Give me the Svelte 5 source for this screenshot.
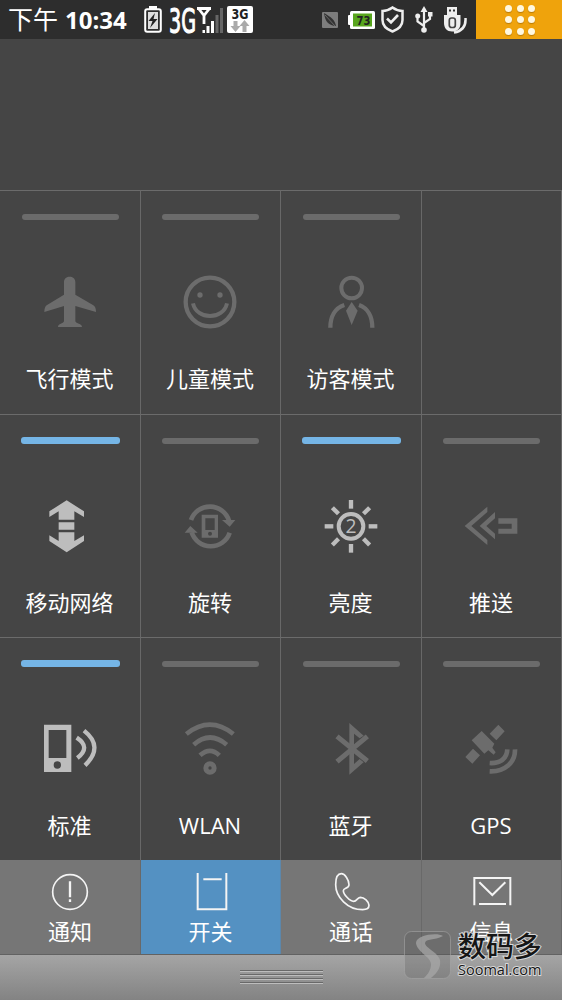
<script lang="ts">
  type Toggle = { icon: string; label: string; on?: boolean };

  const toggles = $state<Toggle[]>([
    { icon: 'plane', label: '飞行模式' },
    { icon: 'child', label: '儿童模式' },
    { icon: 'guest', label: '访客模式' },
    { icon: '', label: '' },
    { icon: 'data', label: '移动网络', on: true },
    { icon: 'rotate', label: '旋转' },
    { icon: 'brightness', label: '亮度', on: true },
    { icon: 'push', label: '推送' },
    { icon: 'sound', label: '标准', on: true },
    { icon: 'wlan', label: 'WLAN' },
    { icon: 'bluetooth', label: '蓝牙' },
    { icon: 'gps', label: 'GPS' }
  ]);

  const tabs = [
    { icon: 'notice', label: '通知' },
    { icon: 'switch', label: '开关' },
    { icon: 'call', label: '通话' },
    { icon: 'message', label: '信息' }
  ];

  let activeTab = $state('switch');

  function flip(item: Toggle) {
    item.on = !item.on;
  }
</script>

<main class="panel">
  <!-- Status bar -->
  <header class="status">
    <div class="status-left">
      <span class="ampm">下午</span>
      <span class="clock">10:34</span>
      <svg class="charge" width="18" height="27" viewBox="0 0 18 27">
        <rect x="5" y="0" width="8" height="4" fill="#fff" />
        <rect x="1.2" y="3.2" width="15.6" height="22.6" rx="2" fill="none" stroke="#fff" stroke-width="2" />
        <rect x="4" y="6" width="10" height="17" fill="#ddd" />
        <path d="M11 7 L4.5 15 H8.5 L6 22 L13.5 13 H9.5 Z" fill="#222" />
      </svg>
      <svg class="signal" width="54" height="28" viewBox="0 0 54 28">
        <text class="tech" x="0" y="27" font-size="34" textLength="27" lengthAdjust="spacingAndGlyphs">3G</text>
        <path d="M28 2.500 H42 M29.500 2.500 L35 9.500 L40.500 2.500 M35 9 V18" fill="none" stroke="#fff" stroke-width="2.800" />
        <path d="M33.500 24 h2.500 v3 h-2.500z M37.500 20 h3 v7 h-3z M42 15 h3 v12 h-3z" fill="#fff" />
        <path d="M46.500 9 h3 v18 h-3z M51 2 h3 v25 h-3z" fill="#666" />
      </svg>
      <svg class="traffic" width="26" height="27" viewBox="0 0 26 27">
        <rect width="26" height="27" rx="2" fill="#fff" />
        <text x="4.500" y="13" font-size="14" textLength="17" lengthAdjust="spacingAndGlyphs">3G</text>
        <path d="M6.500 15 h4 v5 h3 l-5 6 l-5 -6 h3z M15.500 26 h4 v-6 h3 l-5 -6 l-5 6 h3z" fill="#aaa" />
      </svg>
    </div>
    <div class="status-right">
      <svg class="feather" width="16" height="16" viewBox="0 0 16 16">
        <rect width="16" height="16" rx="1" fill="#7d7d7d" />
        <path d="M2 1 C3 10 7 13.500 14 14 C13 8 9 5 2 1Z" fill="#333" />
        <path d="M3 3 L13 14" stroke="#777" stroke-width="0.800" />
      </svg>
      <svg class="battery" width="27" height="18" viewBox="0 0 27 18">
        <rect x="0" y="4" width="4" height="10" rx="1" fill="#fff" />
        <rect x="2" y="0" width="25" height="18" rx="1.500" fill="#fff" />
        <rect x="5" y="2.500" width="19" height="13" fill="#58a51d" />
        <text x="8.500" y="13.800" font-size="13" textLength="14" lengthAdjust="spacingAndGlyphs">73</text>
      </svg>
      <svg class="shield" width="23" height="27" viewBox="0 0 23 27">
        <path
          d="M11.500 1.500 C8 4 5 5 1.500 5 V14 C1.500 20 6 23.500 11.500 25.500 C17 23.500 21.500 20 21.500 14 V5 C18 5 15 4 11.500 1.500Z"
          fill="none"
          stroke="#eee"
          stroke-width="2.500"
        />
        <path d="M6 12.500 L10 16.500 L17 9" fill="none" stroke="#eee" stroke-width="2.600" />
      </svg>
      <svg class="usb" width="18" height="27" viewBox="0 0 18 27">
        <path d="M9 5 V24 M9 20 L2.500 15.500 V11 M9 17 L15 13 V9" fill="none" stroke="#eee" stroke-width="2.200" />
        <path d="M5.500 6 L9 0 L12.500 6Z" fill="#eee" />
        <circle cx="2.700" cy="10" r="2.500" fill="#eee" />
        <rect x="13" y="6" width="4.500" height="4.500" fill="#eee" />
        <circle cx="9" cy="24" r="2.800" fill="#eee" />
      </svg>
      <svg class="usb-debug" width="24" height="28" viewBox="0 0 24 28">
        <path d="M4 1 H14 V10 H4Z" fill="#eee" />
        <path d="M6 3.500 h2 v2 h-2z M10 3.500 h2 v2 h-2z" fill="#333" />
        <path d="M1 9 H17.500 V17 C17.500 23 14 25.500 9 25.500 C4 25.500 1 22 1 17Z" fill="#eee" />
        <rect x="6.300" y="12" width="6" height="9.500" rx="2.300" fill="none" stroke="#444" stroke-width="1.700" />
        <path d="M22.500 12 C23 19 20 25 11 26.500" fill="none" stroke="#eee" stroke-width="2.500" />
      </svg>
      <div class="apps">
        {#each Array(9) as _}
          <i></i>
        {/each}
      </div>
    </div>
  </header>

  <!-- Quick toggles -->
  <section class="grid">
    {#each toggles as item}
      {#if item.icon}
        <button class="cell" class:on={item.on} type="button" onclick={() => flip(item)}>
          <span class="bar"></span>
          <svg class="icon" viewBox="0 0 168 168">
            {#if item.icon === 'plane'}
              <path
                class="solid"
                d="M66 24 C66 3 100 3 100 24 V62 L154 94 Q162 99 162 114 L100 96 V142 C102 149 120 149 120 159 H48 C48 149 64 149 66 142 V96 L7 114 Q7 99 14 94 L66 62Z"
              />
            {:else if item.icon === 'child'}
              <circle class="line" cx="84" cy="84" r="73" stroke-width="13" />
              <circle class="solid" cx="54" cy="63" r="8" />
              <circle class="solid" cx="114" cy="63" r="8" />
              <path class="line" d="M33 88 C44 139 124 139 135 88" stroke-width="12" />
            {:else if item.icon === 'guest'}
              <circle class="line" cx="86" cy="42" r="31" stroke-width="12" />
              <path class="line" d="M64 93 C36 102 22 128 22 161 M108 93 C134 102 148 128 148 161" stroke-width="13" />
              <path class="solid" d="M86 84 L104 110 L86 153 L69 110Z" />
            {:else if item.icon === 'data'}
              <path
                class="solid"
                d="M74 7 L126 40 V57 L97 40 V65 H50 V40 L22 57 V40Z M50 73 H97 V95 H50Z M50 103 H97 V129 L126 112 V129 L74 163 L22 129 V112 L50 129Z"
              />
            {:else if item.icon === 'rotate'}
              <path
                class="solid"
                fill-rule="evenodd"
                d="M59 50 H108 V119 H59Z M70 61 V96 H98 V61Z M78 107 a6 6 0 1 0 12 0 a6 6 0 1 0 -12 0Z"
              />
              <path class="line" d="M27 66 A60 60 0 0 1 141 68 M143 104 A60 60 0 0 1 29 103" stroke-width="14" />
              <path class="solid" d="M120 66 H160 L143 86Z M8 104 H47 L25 84Z" />
            {:else if item.icon === 'brightness'}
              <circle class="line" cx="84" cy="85" r="37" stroke-width="12" />
              {#each [0, 45, 90, 135, 180, 225, 270, 315] as deg}
                <rect class="solid" x="77.500" y="6" width="13" height="26" transform="rotate({deg} 84 85)" />
              {/each}
              <text class="level" x="84" y="105" text-anchor="middle">2</text>
            {:else if item.icon === 'push'}
              <path
                class="solid"
                d="M73 26 V42 L25 84 L73 126 V141 L5 84Z M96 42 V61 L70 84 L96 107 V124 L50 84Z M106 61 H163 V107 H106 V92 H146 V77 H106Z"
              />
            {:else if item.icon === 'sound'}
              <path
                class="solid"
                fill-rule="evenodd"
                d="M6 11 H88 V153 H6Z M20 27 V111 H73 V27Z M35 132 a11 11 0 1 0 22 0 a11 11 0 1 0 -22 0Z"
              />
              <path class="line" d="M104 50 Q148 79 106 111 M126 29 Q187 77 129 133" stroke-width="13" />
            {:else if item.icon === 'wlan'}
              <path class="line" d="M13 39 Q84 -17 154 39 M35 71 Q84 28 134 71 M54 103 Q84 76 112 103" stroke-width="14" />
              <circle class="line" cx="84" cy="141" r="12.500" stroke-width="15" />
            {:else if item.icon === 'bluetooth'}
              <path class="solid" d="M79 6 L122 44 L110 52 L93 38 V129 L110 114 L122 124 L79 161Z" />
              <path class="line" d="M42 46 L133 120 M42 122 L133 46" stroke-width="15" />
            {:else if item.icon === 'gps'}
              <path
                class="solid"
                d="M26 58 L56 30 L94 68 L88 80 L98 94 L92 101 L76 88 L64 98Z M106 11 L125 31 L100 58 L80 38Z M30 83 L51 103 L28 128 L7 108Z"
              />
              <path class="line" d="M133 85 C132 112 112 128 80 126 M156 85 C157 125 125 153 80 151" stroke-width="14" />
            {/if}
          </svg>
          <span class="label">{item.label}</span>
        </button>
      {:else}
        <div class="cell"></div>
      {/if}
    {/each}
  </section>

  <!-- Bottom tabs -->
  <nav class="tabs">
    {#each tabs as tab}
      <button class="tab" class:active={activeTab === tab.icon} type="button" onclick={() => (activeTab = tab.icon)}>
        <svg class="tab-icon" viewBox="0 0 120 120">
          {#if tab.icon === 'notice'}
            <circle cx="60" cy="60" r="52" />
            <path d="M60 28 V76 M60 82 V90" stroke-width="7" />
          {:else if tab.icon === 'switch'}
            <path d="M20 3 V112 H106 V3 M37 22 H92" stroke-width="6" />
          {:else if tab.icon === 'call'}
            <path
              d="M31 5 C20 5 14 18 14 38 C14 75 50 113 95 113 C108 113 114 108 114 100 C113 88 100 76 88 76 C78 77 78 88 68 88 C56 88 37 66 37 56 C37 48 54 50 54 38 C54 24 42 5 31 5Z"
            />
          {:else}
            <path d="M7 100 V18 H115 V100 M21 96 H102 M22 31 L61 69 L100 31" stroke-width="6" />
          {/if}
        </svg>
        <span>{tab.label}</span>
      </button>
    {/each}
  </nav>

  <!-- Pull handle -->
  <footer class="handle">
    <div class="grip"><i></i><i></i><i></i><i></i></div>
  </footer>

  <div class="watermark">
    <svg width="47" height="48" viewBox="0 0 47 48">
      <rect x="0.500" y="0.500" width="46" height="47" rx="7" fill="#555" fill-opacity="0.250" stroke="#aaa" stroke-opacity="0.550" />
      <path
        d="M39 5 C33 1 12 4 12 12 C13 21 27 26 27 33 C27 39 24 43 20 47 H27 C34 41 37 36 36 29 C34 21 21 17 21 12 C22 7 30 10 39 5Z"
        fill="#aaa"
        fill-opacity="0.700"
      />
    </svg>
    <div class="brand">
      <strong>数码多</strong>
      <span>Soomal.com</span>
    </div>
  </div>
</main>

<style>
  :global(body) {
    margin: 0;
    background: #444;
  }

  .panel {
    position: relative;
    width: 562px;
    height: 1000px;
    overflow: hidden;
    display: flex;
    flex-direction: column;
    background: #454545;
    color: #fff;
    font-family: 'Open Sans', 'Noto Sans CJK SC', sans-serif;
  }

  button {
    border: 0;
    margin: 0;
    padding: 0;
    background: none;
    color: inherit;
    font: inherit;
    cursor: pointer;
  }

  svg {
    display: block;
    flex: none;
  }

  /* Status bar */
  .status {
    height: 39px;
    flex: none;
    display: flex;
    justify-content: space-between;
    background: #2d2d2d;
  }

  .status-left,
  .status-right {
    display: flex;
    align-items: center;
  }

  .status-left {
    padding-left: 8px;
  }

  .ampm {
    width: 57px;
    font-size: 25px;
    line-height: 39px;
  }

  .clock {
    width: 79px;
    font-size: 24px;
    line-height: 39px;
    font-weight: 700;
  }

  .charge {
    margin-right: 7px;
  }

  .signal {
    margin-right: 4px;
    overflow: visible;
  }

  .status text {
    font-family: 'DejaVu Sans', sans-serif;
    font-weight: 700;
    fill: #222;
  }

  .status .tech {
    font-weight: 400;
    fill: #fff;
    stroke: #fff;
    stroke-width: 1.2;
  }

  .feather {
    margin-right: 10px;
  }

  .battery {
    margin-right: 6px;
  }

  .shield {
    margin-right: 11px;
  }

  .usb {
    margin-right: 10px;
  }

  .usb-debug {
    margin-right: 9px;
  }

  .apps {
    width: 86px;
    height: 39px;
    display: grid;
    grid-template-columns: repeat(3, 7px);
    gap: 4.5px;
    place-content: center;
    padding-left: 2px;
    box-sizing: border-box;
    background: #efa30c;
  }

  .apps i {
    width: 7px;
    height: 7px;
    border-radius: 50%;
    background: #fff8e0;
    box-shadow: 0 1px 1px #b87b08;
  }

  /* Quick toggles */
  .grid {
    margin-top: 151px;
    flex: none;
    display: grid;
    grid-template-columns: 141px 140px 141px 140px;
    grid-template-rows: 224px 223px 223px;
  }

  .cell {
    box-sizing: border-box;
    display: flex;
    flex-direction: column;
    align-items: center;
    padding-top: 23px;
    border-top: 1px solid #6b6b6b;
    border-right: 1px solid #686868;
    color: #6c6c6c;
  }

  .bar {
    width: 97px;
    height: 6px;
    border-radius: 3px;
    background: #6b6b6b;
  }

  .icon {
    width: 56px;
    height: 56px;
    margin-top: 54px;
    margin-right: 1px;
  }

  .solid {
    fill: currentColor;
  }

  .line {
    fill: none;
    stroke: currentColor;
  }

  .level {
    font-size: 58px;
    fill: currentColor;
  }

  .label {
    margin-top: 32px;
    margin-right: 1px;
    font-size: 22px;
    line-height: 32px;
    color: #fff;
  }

  .on {
    color: #bdbdbd;
  }

  .on .bar {
    width: 99px;
    height: 7px;
    margin-top: -1px;
    background: #75b5e6;
  }

  /* Bottom tabs */
  .tabs {
    height: 94px;
    flex: none;
    display: grid;
    grid-template-columns: 141px 140px 141px 140px;
  }

  .tab {
    box-sizing: border-box;
    display: flex;
    flex-direction: column;
    align-items: center;
    padding-top: 12px;
    border-right: 1px solid #696969;
    background: #767676;
    font-size: 22px;
    line-height: 32px;
  }

  .tab span {
    margin-top: 3px;
  }

  .tab.active {
    background: #5491c2;
    border-right-color: #5c87ab;
  }

  .tab-icon {
    width: 40px;
    height: 40px;
    fill: none;
    stroke: #f4f4f4;
    stroke-width: 5;
  }

  /* Pull handle */
  .handle {
    flex: 1;
    display: flex;
    justify-content: center;
    border-top: 1px solid #626262;
    background: linear-gradient(#a5a5a5, #838383);
  }

  .grip {
    width: 83px;
    padding-top: 15px;
    display: flex;
    flex-direction: column;
    gap: 2px;
  }

  .grip i {
    height: 1px;
    border-top: 1px solid #696969;
    background: #bdbdbd;
  }

  /* Watermark */
  .watermark {
    position: absolute;
    left: 404px;
    top: 931px;
    display: flex;
    gap: 7px;
  }

  .brand {
    display: flex;
    flex-direction: column;
    color: #161616;
    paint-order: stroke fill;
    -webkit-text-stroke: 2px #d8d8d8;
  }

  .brand strong {
    font-size: 28px;
    line-height: 31px;
    font-weight: 500;
    letter-spacing: -0.1px;
  }

  .brand span {
    font-size: 14.5px;
    line-height: 16px;
  }
</style>
